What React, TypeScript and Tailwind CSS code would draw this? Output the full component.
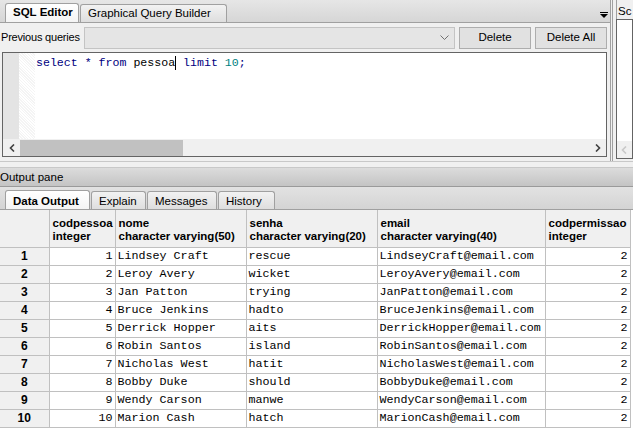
import React from 'react'

const ROWS = [
  [1, 'Lindsey Craft', 'rescue', 'LindseyCraft@email.com', 2],
  [2, 'Leroy Avery', 'wicket', 'LeroyAvery@email.com', 2],
  [3, 'Jan Patton', 'trying', 'JanPatton@email.com', 2],
  [4, 'Bruce Jenkins', 'hadto', 'BruceJenkins@email.com', 2],
  [5, 'Derrick Hopper', 'aits', 'DerrickHopper@email.com', 2],
  [6, 'Robin Santos', 'island', 'RobinSantos@email.com', 2],
  [7, 'Nicholas West', 'hatit', 'NicholasWest@email.com', 2],
  [8, 'Bobby Duke', 'should', 'BobbyDuke@email.com', 2],
  [9, 'Wendy Carson', 'manwe', 'WendyCarson@email.com', 2],
  [10, 'Marion Cash', 'hatch', 'MarionCash@email.com', 2],
]

const COLUMNS = [
  { name: 'codpessoa', type: 'integer', width: 'w-[66px]' },
  { name: 'nome', type: 'character varying(50)', width: 'w-[131px]' },
  { name: 'senha', type: 'character varying(20)', width: 'w-[131px]' },
  { name: 'email', type: 'character varying(40)', width: 'w-[168px]' },
  { name: 'codpermissao', type: 'integer', width: 'w-[85px]' },
]

const ui = "font-['Liberation_Sans',Arial,sans-serif]"
const mono = "font-['Liberation_Mono','Courier_New',monospace]"

function Tab({ label, active, width, low }: { label: string; active?: boolean; width: string; low?: boolean }) {
  return (
    <div
      className={`${width} flex-none flex items-center border border-b-0 border-[#a0a0a0] rounded-t-[3px] pl-[7px] text-[11.5px] text-black whitespace-nowrap ${
        low ? 'pt-[3px]' : ''
      } ${
        active
          ? 'h-[19px] bg-gradient-to-b from-white to-[#f4f4f4] font-bold'
          : 'h-[18px] bg-gradient-to-b from-[#f2f2f2] to-[#dedede]'
      }`}
    >
      {label}
    </div>
  )
}

export default function App() {
  return (
    <div className={`w-[633px] h-[430px] overflow-hidden bg-[#f0f0f0] flex flex-col ${ui}`}>
      {/* top: SQL editor + scratch pad */}
      <div className="h-[161px] flex-none flex">
        <div className="w-[613px] flex flex-col border-r-[3px] border-double border-[#a0a0a0]">
          <div className="h-[23px] flex items-end pl-[5px] gap-[1px] bg-gradient-to-b from-[#e6e6e6] to-[#d6d6d6] border-b border-[#a0a0a0] relative">
            <Tab label="SQL Editor" active width="w-[74px]" />
            <Tab label="Graphical Query Builder" width="w-[147px]" />
            <svg className="absolute right-[2px] top-[12px]" width="8" height="6" viewBox="0 0 8 6">
              <rect x="0" y="0" width="8" height="1" fill="#000" />
              <path d="M0 2h8L4 6z" fill="#000" />
            </svg>
          </div>
          <div className="h-[29px] flex items-center gap-[4px] pr-[3px]">
            <span className="w-[80px] flex-none text-[11px] tracking-[-0.2px] pl-[1px] whitespace-nowrap">Previous queries</span>
            <div className="w-[371px] flex-none h-[22px] border border-[#c4c4c4] bg-[#e5e5e5] flex items-center justify-end pr-[5px]">
              <svg width="9" height="5" viewBox="0 0 9 5">
                <path d="M0.5 0.5L4.5 4.5L8.5 0.5" stroke="#707070" fill="none" />
              </svg>
            </div>
            <button className="w-[72px] flex-none h-[22px] border border-[#adadad] bg-[#e1e1e1] text-[11.5px]">Delete</button>
            <button className="w-[72px] flex-none h-[22px] border border-[#adadad] bg-[#e1e1e1] text-[11.5px]">Delete All</button>
          </div>
          <div className="ml-[2px] mr-[3px] h-[105px] border border-[#646464] bg-white flex flex-col">
            <div className="flex-1 flex">
              <div className="w-[16px] bg-[#e4e4e4]" />
              <div className="w-[16px] bg-[repeating-linear-gradient(45deg,#f4f4f4_0px,#f4f4f4_1px,#ffffff_1px,#ffffff_2px)]" />
              <div className={`pl-[1px] pt-[2px] text-[11.6px] leading-[16px] whitespace-pre ${mono}`}>
                <span className="text-[#00007f]">select * from</span>
                <span className="text-black"> pessoa</span>
                <span className="inline-block w-[1px] h-[14px] bg-black align-middle" />
                <span className="text-[#00007f]"> limit </span>
                <span className="text-[#007f7f]">10</span>
                <span className="text-[#00007f]">;</span>
              </div>
            </div>
            <div className="h-[17px] bg-[#f0f0f0] flex items-center">
              <div className="w-[17px] flex justify-center">
                <svg width="6" height="8" viewBox="0 0 6 8">
                  <path d="M5 0.5L1.5 4L5 7.5" stroke="#404040" strokeWidth="1.6" fill="none" />
                </svg>
              </div>
              <div className="w-[163px] h-[16px] bg-[#c1c1c1]" />
              <div className="flex-1" />
              <div className="w-[17px] flex justify-center">
                <svg width="6" height="8" viewBox="0 0 6 8">
                  <path d="M1 0.5L4.5 4L1 7.5" stroke="#404040" strokeWidth="1.6" fill="none" />
                </svg>
              </div>
            </div>
          </div>
        </div>
        <div className="flex-1 flex flex-col pl-[3px]">
          <div className="h-[19px] text-[11.5px] pt-[3px] pl-[1px] border-l border-[#a0a0a0]">Sc</div>
          <div className="flex-1 mb-[2px] border border-[#646464] bg-white flex flex-col justify-end">
            <div className="h-[17px] bg-[#f0f0f0] flex items-center pl-[4px]">
              <svg width="6" height="8" viewBox="0 0 6 8">
                <path d="M5 0.5L1.5 4L5 7.5" stroke="#c8c8c8" strokeWidth="1.6" fill="none" />
              </svg>
            </div>
          </div>
        </div>
      </div>

      {/* splitter */}
      <div className="h-[7px] flex-none border-t border-b border-[#c8c8c8] bg-[#f0f0f0]" />

      {/* output pane */}
      <div className="h-[19px] flex-none flex items-center pt-[1px] text-[11.5px] bg-gradient-to-b from-[#dcdcdc] to-[#c4c4c4] border-b border-[#9a9a9a]">
        Output pane
      </div>
      <div className="h-[23px] flex-none flex items-end pl-[5px] gap-[1px] bg-gradient-to-b from-[#e2e2e2] to-[#d4d4d4] border-b border-[#a0a0a0]">
        <Tab label="Data Output" active low width="w-[85px]" />
        <Tab label="Explain" low width="w-[55px]" />
        <Tab label="Messages" low width="w-[70px]" />
        <Tab label="History" low width="w-[57px]" />
      </div>

      {/* data grid */}
      <div className="flex-1 bg-white">
        <table className="table-fixed border-collapse">
          <thead>
            <tr className="h-[37px]">
              <th className="w-[49px] bg-[#f0f0f0] border border-l-0 border-t-0 border-[#c0c0c0]" />
              {COLUMNS.map((c) => (
                <th
                  key={c.name}
                  className={`${c.width} bg-[#f0f0f0] border border-t-0 border-[#c0c0c0] text-left align-middle pl-[3px] pt-[4px] font-bold text-[11.5px] leading-[13px] whitespace-nowrap overflow-hidden`}
                >
                  <div>{c.name}</div>
                  <div>{c.type}</div>
                </th>
              ))}
            </tr>
          </thead>
          <tbody className={`${mono} text-[11.7px] leading-[15px]`}>
            {ROWS.map((r) => (
              <tr key={r[0]} className="h-[18px]">
                <td className={`bg-[#f0f0f0] border border-l-0 border-[#c0c0c0] text-center font-bold text-[12px] leading-[15px] ${ui}`}>
                  {r[0]}
                </td>
                <td className="border border-[#c0c0c0] text-right pr-[2px]">{r[0]}</td>
                <td className="border border-[#c0c0c0] pl-[2px] whitespace-nowrap">{r[1]}</td>
                <td className="border border-[#c0c0c0] pl-[2px] whitespace-nowrap">{r[2]}</td>
                <td className="border border-[#c0c0c0] pl-[2px] whitespace-nowrap">{r[3]}</td>
                <td className="border border-[#c0c0c0] text-right pr-[2px]">{r[4]}</td>
              </tr>
            ))}
          </tbody>
        </table>
      </div>
    </div>
  )
}
